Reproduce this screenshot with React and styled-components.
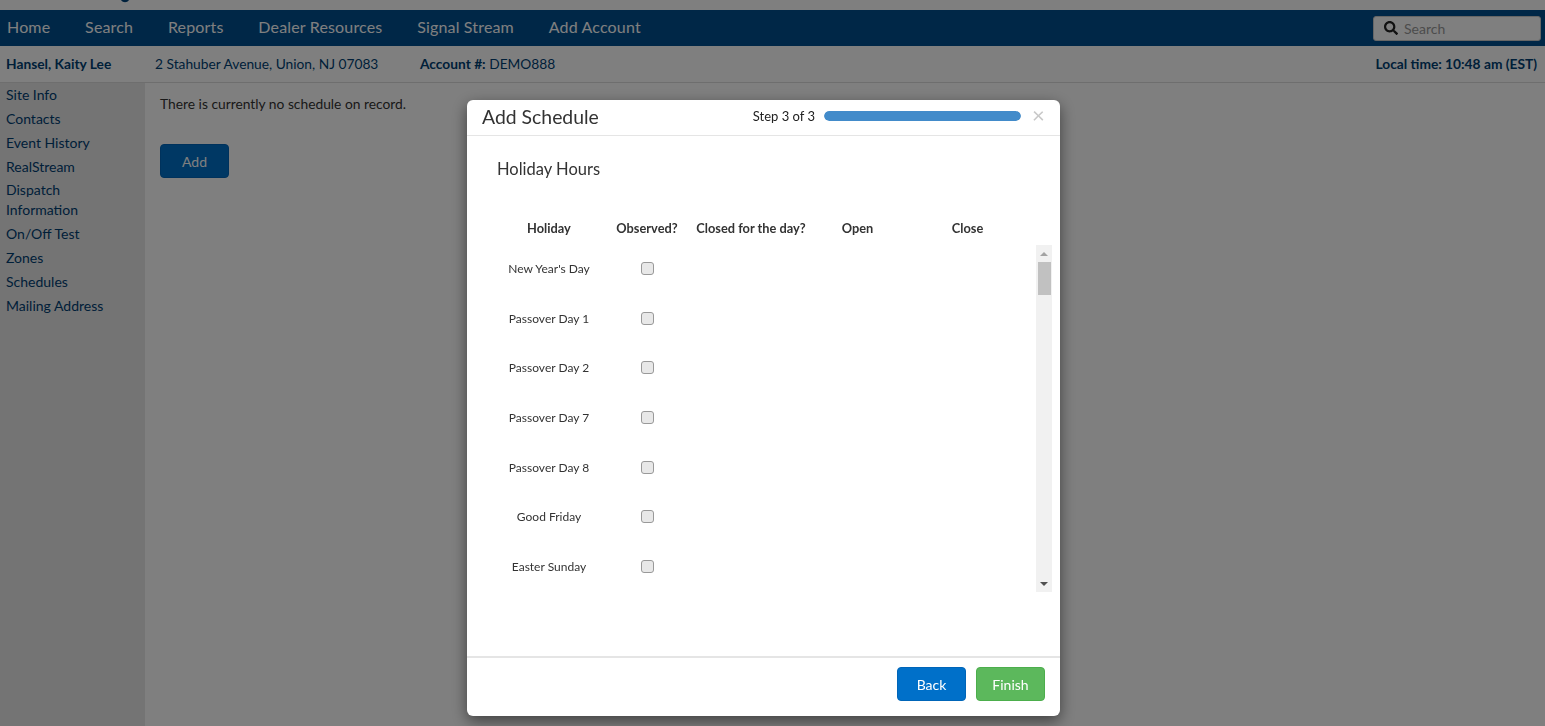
import React from 'react'
import styled, { createGlobalStyle } from 'styled-components'
import { FaSearch } from 'react-icons/fa'

const GlobalStyle = createGlobalStyle`
  html, body { margin: 0; padding: 0; height: 100%; }
  body { font-family: Lato, "Liberation Sans", sans-serif; background: #fff; color: #333; overflow: hidden; }
  * { box-sizing: border-box; }
`

const NAV_ITEMS = ['Home', 'Search', 'Reports', 'Dealer Resources', 'Signal Stream', 'Add Account']
const SIDE_ITEMS = ['Site Info', 'Contacts', 'Event History', 'RealStream', 'Dispatch Information', 'On/Off Test', 'Zones', 'Schedules', 'Mailing Address']
const HOLIDAYS = ["New Year's Day", 'Passover Day 1', 'Passover Day 2', 'Passover Day 7', 'Passover Day 8', 'Good Friday', 'Easter Sunday']

const Page = styled.div`
  width: 100%;
  height: 100vh;
  display: flex;
  flex-direction: column;
  overflow: hidden;
`
const TopStrip = styled.div`
  height: 10px;
  flex: none;
  padding-left: 120px;
  background: #fff;
`
// only the bottom of the logo peeks out above the nav
const LogoTail = styled.svg`
  display: block;
  width: 10px;
  height: 3px;
`
const NavBar = styled.nav`
  height: 36px;
  flex: none;
  display: flex;
  align-items: center;
  justify-content: space-between;
  padding: 0 4px 0 7px;
  background: #004e8f;
`
const NavLinks = styled.div`
  display: flex;
  gap: 34.8px;
  margin-top: -4px;
`
const NavLink = styled.a`
  color: #fff;
  font-size: 16px;
  letter-spacing: 0.16px;
  white-space: nowrap;
`
const SearchBox = styled.div`
  width: 168px;
  height: 25px;
  display: flex;
  align-items: center;
  gap: 6px;
  padding-left: 10px;
  background: #fff;
  border: 1px solid #ccc;
  border-radius: 3px;
  color: #999;
  font-size: 14px;
  svg { color: #222; font-size: 14px; }
`
const InfoBar = styled.div`
  height: 37px;
  flex: none;
  display: flex;
  align-items: center;
  padding: 0 8px 2px 6px;
  border-bottom: 1px solid #ddd;
  color: #003e73;
  font-size: 13.75px;
`
const ClientName = styled.b`
  width: 149px;
`
const Address = styled.span`
  width: 265px;
`
const LocalTime = styled.b`
  margin-left: auto;
`
const Body = styled.div`
  flex: 1;
  display: flex;
  min-height: 0;
`
const Sidebar = styled.aside`
  width: 145px;
  flex: none;
  padding: 2px 30px 2px 6px;
  background: #e8e8e8;
`
const SideLink = styled.a`
  display: block;
  margin-bottom: 3.85px;
  color: #003e73;
  font-size: 14px;
  line-height: 20px;
`
const Content = styled.main`
  flex: 1;
  padding: 11px 15px;
  font-size: 13.8px;
  line-height: 20px;
`
const Message = styled.p`
  margin: 0 0 30px;
`
const Button = styled.button`
  width: 69px;
  height: 34px;
  border: 1px solid ${p => p.$success ? '#4cae4c' : '#0065b8'};
  border-radius: 4px;
  background: ${p => p.$success ? '#5cb85c' : '#0070c9'};
  color: #fff;
  font-family: inherit;
  font-size: 14px;
`
const Backdrop = styled.div`
  position: fixed;
  inset: 0;
  display: flex;
  justify-content: center;
  padding: 100px 18px 0 0;
  background: rgba(0, 0, 0, 0.5);
`
const Modal = styled.div`
  width: 593px;
  height: 616px;
  display: flex;
  flex-direction: column;
  background: #fff;
  border-radius: 6px;
  box-shadow: 0 5px 15px rgba(0, 0, 0, 0.5);
`
const ModalHeader = styled.header`
  height: 36px;
  flex: none;
  display: flex;
  align-items: center;
  padding: 0 17px 3px 15px;
  border-bottom: 1px solid #e5e5e5;
`
const ModalTitle = styled.h4`
  flex: 1;
  margin: 0;
  font-size: 19.4px;
  font-weight: 400;
  color: #333;
`
const StepLabel = styled.span`
  margin: -1px 9px 0 0;
  font-size: 13px;
  color: #222;
`
const ProgressTrack = styled.div`
  width: 197px;
  height: 10px;
  margin-top: -1px;
  border-radius: 5px;
  background: #f5f5f5;
  overflow: hidden;
`
const ProgressFill = styled.div`
  height: 100%;
  border-radius: 5px;
  background: #428bca;
`
const CloseButton = styled.span`
  width: 11px;
  margin: -3px 0 0 11px;
  color: #c8c8c8;
  font-size: 22px;
  line-height: 18px;
`
const ModalBody = styled.div`
  flex: 1;
  min-height: 0;
  padding: 22px 7px 0 30px;
`
const SectionTitle = styled.h5`
  margin: 0 0 39px;
  font-size: 16.5px;
  line-height: 22px;
  font-weight: 400;
  color: #333;
`
const Columns = styled.div`
  display: grid;
  grid-template-columns: 104px 92px 116px 97px 123px;
  align-items: center;
  justify-items: center;
`
const HeadCell = styled.span`
  font-size: 12.8px;
  line-height: 18px;
  font-weight: 700;
  color: #333;
  white-space: nowrap;
`
const ListFrame = styled.div`
  display: flex;
  height: 347px;
  margin-top: 8px;
`
const Rows = styled.div`
  width: 539px;
  overflow: hidden;
`
const Row = styled(Columns)`
  height: 49.6px;
`
const HolidayName = styled.span`
  margin-bottom: 2px;
  font-size: 12px;
  color: #333;
  white-space: nowrap;
`
const Check = styled.input.attrs({ type: 'checkbox' })`
  width: 13px;
  height: 13px;
  margin: 0 0 2px;
  appearance: none;
  background: #e8e8e8;
  border: 1px solid #999;
  border-radius: 3px;
`
const ScrollTrack = styled.div`
  width: 16px;
  display: flex;
  flex-direction: column;
  align-items: center;
  background: #f1f1f1;
`
const ScrollArrow = styled.div`
  height: 17px;
  flex: none;
  display: flex;
  align-items: center;
  justify-content: center;
  &::before {
    content: '';
    border-left: 4px solid transparent;
    border-right: 4px solid transparent;
    ${p => p.$down ? 'border-top: 4px solid #505050;' : 'border-bottom: 4px solid #a3a3a3;'}
  }
`
const ScrollThumb = styled.div`
  width: 13px;
  height: 33px;
  flex: none;
  background: #c1c1c1;
`
const ScrollGap = styled.div`
  flex: 1;
`
const ModalFooter = styled.footer`
  height: 60px;
  flex: none;
  display: flex;
  align-items: flex-start;
  justify-content: flex-end;
  gap: 10px;
  padding: 9px 15px 0;
  border-top: 2px solid #e5e5e5;
`

const App = () => (
  <>
    <GlobalStyle />
    <Page>
      <TopStrip>
        <LogoTail viewBox="0 0 10 3"><path d="M1 0 C3 3 7 3 9 0 Z" fill="#00427a" /></LogoTail>
      </TopStrip>
      <NavBar>
        <NavLinks>
          {NAV_ITEMS.map(item => <NavLink key={item}>{item}</NavLink>)}
        </NavLinks>
        <SearchBox><FaSearch />Search</SearchBox>
      </NavBar>
      <InfoBar>
        <ClientName>Hansel, Kaity Lee</ClientName>
        <Address>2 Stahuber Avenue, Union, NJ 07083</Address>
        <span><b>Account #:</b> DEMO888</span>
        <LocalTime>Local time: 10:48 am (EST)</LocalTime>
      </InfoBar>
      <Body>
        <Sidebar>
          {SIDE_ITEMS.map(item => <SideLink key={item}>{item}</SideLink>)}
        </Sidebar>
        <Content>
          <Message>There is currently no schedule on record.</Message>
          <Button>Add</Button>
        </Content>
      </Body>
    </Page>
    <Backdrop>
      <Modal>
        <ModalHeader>
          <ModalTitle>Add Schedule</ModalTitle>
          <StepLabel>Step 3 of 3</StepLabel>
          <ProgressTrack><ProgressFill /></ProgressTrack>
          <CloseButton>×</CloseButton>
        </ModalHeader>
        <ModalBody>
          <SectionTitle>Holiday Hours</SectionTitle>
          <Columns>
            <HeadCell>Holiday</HeadCell>
            <HeadCell>Observed?</HeadCell>
            <HeadCell>Closed for the day?</HeadCell>
            <HeadCell>Open</HeadCell>
            <HeadCell>Close</HeadCell>
          </Columns>
          <ListFrame>
            <Rows>
              {HOLIDAYS.map(name => (
                <Row key={name}>
                  <HolidayName>{name}</HolidayName>
                  <Check />
                </Row>
              ))}
            </Rows>
            <ScrollTrack>
              <ScrollArrow />
              <ScrollThumb />
              <ScrollGap />
              <ScrollArrow $down />
            </ScrollTrack>
          </ListFrame>
        </ModalBody>
        <ModalFooter>
          <Button>Back</Button>
          <Button $success>Finish</Button>
        </ModalFooter>
      </Modal>
    </Backdrop>
  </>
)

export default App
